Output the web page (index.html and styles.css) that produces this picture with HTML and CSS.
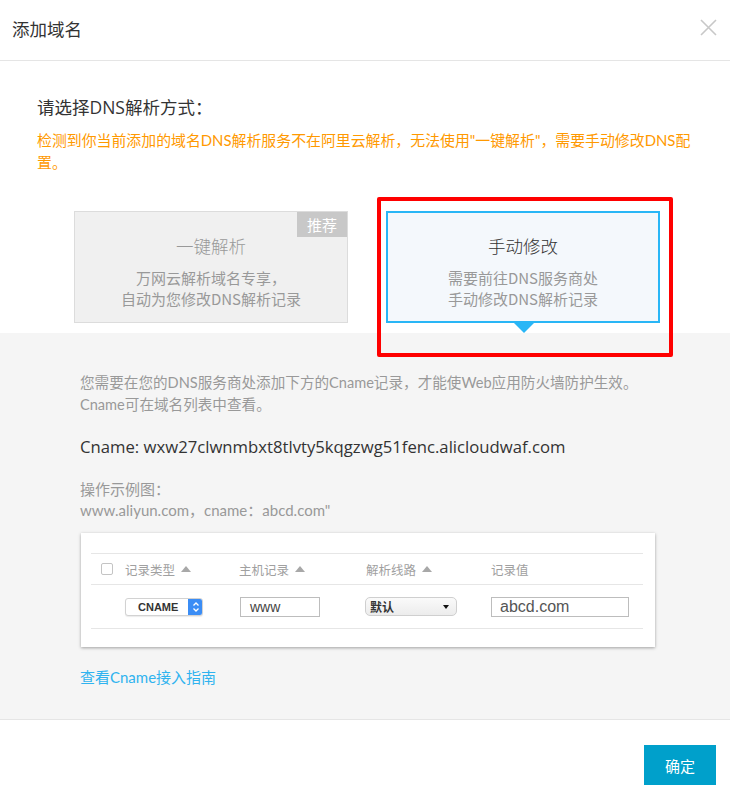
FILE: index.html
```html
<!DOCTYPE html>
<html lang="zh-CN">
<head>
<meta charset="utf-8">
<title>添加域名</title>
<link rel="stylesheet" href="styles.css">
</head>
<body>
<div class="dialog">
  <div class="header">
    <span class="title">添加域名</span>
    <span class="close" aria-label="关闭">
      <svg width="17" height="17" viewBox="0 0 17 17"><path d="M1 1L16 16M16 1L1 16" stroke="#c8c8c8" stroke-width="1.6" fill="none"/></svg>
    </span>
  </div>

  <div class="intro">
    <div class="question">请选择DNS解析方式：</div>
    <div class="warn">检测到你当前添加的域名DNS解析服务不在阿里云解析，无法使用"一键解析"，需要手动修改DNS配置。</div>
  </div>

  <div class="choices">
    <div class="card card-off">
      <span class="badge">推荐</span>
      <div class="card-title">一键解析</div>
      <div class="card-sub">万网云解析域名专享，<br>自动为您修改DNS解析记录</div>
    </div>
    <div class="card card-on">
      <div class="card-title">手动修改</div>
      <div class="card-sub">需要前往DNS服务商处<br>手动修改DNS解析记录</div>
      <span class="arrow"></span>
    </div>
  </div>

  <div class="detail">
    <p class="note">您需要在您的DNS服务商处添加下方的Cname记录，才能使Web应用防火墙防护生效。<br>Cname可在域名列表中查看。</p>
    <p class="cname">Cname: wxw27clwnmbxt8tlvty5kqgzwg51fenc.alicloudwaf.com</p>
    <p class="example">操作示例图：<br>www.aliyun.com，cname：abcd.com"</p>
    <div class="shot">
      <div class="trow thead">
        <span class="chk"></span>
        <span class="th">记录类型<i class="up"></i></span>
        <span class="th">主机记录<i class="up"></i></span>
        <span class="th">解析线路<i class="up"></i></span>
        <span class="th">记录值</span>
      </div>
      <div class="trow tbody">
        <span></span>
        <span class="sel-cname">CNAME<span class="spin"><svg width="8" height="12" viewBox="0 0 8 12"><path d="M1.5 4.5L4 2L6.5 4.5M1.5 7.5L4 10L6.5 7.5" stroke="#fff" stroke-width="1.3" fill="none"/></svg></span></span>
        <span class="inp inp-host">www</span>
        <span class="sel-line">默认<i class="down"></i></span>
        <span class="inp inp-val">abcd.com</span>
      </div>
    </div>
    <a class="guide" href="#">查看Cname接入指南</a>
  </div>

  <div class="footer">
    <button class="ok">确定</button>
  </div>

  <div class="highlight"></div>
</div>
</body>
</html>
```

FILE: styles.css
```css
* { box-sizing: border-box; }
html, body { margin: 0; padding: 0; background: #fff; }
body {
  font-family: "Noto Sans CJK SC", sans-serif;
  color: #333;
}
.dialog {
  position: relative;
  width: 730px;
  height: 802px;
  background: #fff;
}
.header {
  height: 61px;
  border-bottom: 1px solid #e5e5e5;
  display: flex;
  align-items: center;
  justify-content: space-between;
  padding: 0 13px 3px 12px;
}
.title { font-size: 17.5px; line-height: 24px; color: #333; }
.close { display: flex; margin-top: -2px; }

.intro { padding: 33px 0 0 37px; }
.question {
  font-family: "Open Sans", "Noto Sans CJK SC", sans-serif;
  font-size: 17.5px;
  line-height: 26px;
  color: #333;
}
.warn {
  margin-top: 10px;
  width: 670px;
  font-family: "Lato", "Noto Sans CJK SC", sans-serif;
  font-size: 14.9px;
  line-height: 21.5px;
  color: #ff9900;
}

.choices {
  display: flex;
  gap: 38px;
  padding: 38px 0 10px 74px;
}
.card {
  position: relative;
  width: 274px;
  height: 112px;
  text-align: center;
  padding-top: 22px;
}
.card-off {
  background: #f0f0f0;
  border: 1px solid #dcdcdc;
  color: #999;
}
.card-on {
  background: #f4f8fc;
  border: 2px solid #29b6f6;
  padding-top: 21px;
}
.card-title { font-size: 17.5px; line-height: 24px; font-weight: 300; }
.card-off .card-title { color: #999; }
.card-on .card-title { color: #333; }
.card-sub {
  margin-top: 9px;
  font-size: 15px;
  line-height: 21px;
  color: #999;
}
.badge {
  position: absolute;
  top: 0;
  right: 0;
  width: 50px;
  height: 25px;
  background: #c8c8c8;
  color: #fff;
  font-size: 15px;
  line-height: 25px;
  text-align: center;
}
.arrow {
  position: absolute;
  left: 126px;
  bottom: -12px;
  width: 0;
  height: 0;
  border-left: 10px solid transparent;
  border-right: 10px solid transparent;
  border-top: 10px solid #29b6f6;
}

.detail {
  background: #f5f5f5;
  border-bottom: 1px solid #e5e5e5;
  padding: 39px 0 30px 80px;
  height: 387px;
}
.detail p { margin: 0; }
.note {
  font-family: "Lato", "Noto Sans CJK SC", sans-serif;
  font-size: 14.6px;
  line-height: 22px;
  color: #999;
}
.cname {
  margin-top: 19px !important;
  font-family: "Open Sans", "Noto Sans CJK SC", sans-serif;
  font-size: 16.7px;
  line-height: 24px;
  color: #333;
}
.example {
  margin-top: 20px !important;
  font-family: "Lato", "Noto Sans CJK SC", sans-serif;
  font-size: 15px;
  line-height: 21px;
  color: #999;
}

.shot {
  margin: 12px 0 0 1px;
  width: 574px;
  height: 114px;
  background: #fff;
  box-shadow: 0 1px 3px rgba(0,0,0,0.35);
  padding: 20px 12px 0 10px;
}
.trow {
  display: grid;
  grid-template-columns: 34px 114px 127px 125px 1fr;
  align-items: center;
  border-top: 1px solid #e6e6e6;
}
.thead { height: 31px; }
.tbody { height: 45px; border-bottom: 1px solid #e6e6e6; }
.chk {
  margin-left: 10px;
  width: 12px;
  height: 12px;
  border: 1px solid #c4c4c4;
  border-radius: 2px;
  background: #fff;
}
.th {
  font-size: 12.5px;
  color: #a0a0a0;
  display: flex;
  align-items: center;
  gap: 6px;
}
.up {
  width: 0;
  height: 0;
  border-left: 5px solid transparent;
  border-right: 5px solid transparent;
  border-bottom: 6px solid #a8a8a8;
}
.sel-cname {
  width: 78px;
  height: 18px;
  border: 1px solid #d2d2d2;
  border-radius: 3px;
  background: #fff;
  display: flex;
  align-items: center;
  justify-content: space-between;
  padding-left: 12px;
  font-family: "Liberation Sans", sans-serif;
  font-size: 11px;
  font-weight: bold;
  color: #333;
  overflow: hidden;
  box-shadow: 0 1px 1px rgba(0,0,0,0.08);
}
.spin {
  width: 15px;
  height: 18px;
  background: #3b8df5;
  display: flex;
  align-items: center;
  justify-content: center;
  margin-right: -1px;
}
.inp {
  height: 20px;
  border: 1px solid #bdbdbd;
  background: #fff;
  display: flex;
  align-items: center;
  color: #444;
}
.inp-host {
  width: 80px;
  margin-left: 1px;
  padding-left: 9px;
  font-family: "Liberation Sans", sans-serif;
  font-size: 14px;
}
.inp-val {
  width: 138px;
  padding-left: 8px;
  font-family: "Liberation Sans", sans-serif;
  font-size: 16px;
  color: #555;
}
.sel-line {
  width: 92px;
  height: 19px;
  margin-left: -1px;
  border: 1px solid #cfcfcf;
  border-radius: 5px;
  background: linear-gradient(#fafafa, #ececec);
  display: flex;
  align-items: center;
  justify-content: space-between;
  padding: 0 7px 0 4px;
  font-size: 12px;
  font-weight: bold;
  color: #333;
}
.down {
  width: 0;
  height: 0;
  border-left: 3.5px solid transparent;
  border-right: 3.5px solid transparent;
  border-top: 4px solid #111;
}
.guide {
  display: inline-block;
  margin-top: 19px;
  font-family: "Lato", "Noto Sans CJK SC", sans-serif;
  font-size: 15px;
  line-height: 22px;
  color: #2fb3ef;
  text-decoration: none;
}

.footer {
  display: flex;
  justify-content: flex-end;
  padding: 25px 14px 0 0;
}
.ok {
  width: 72px;
  height: 40px;
  border: none;
  background: #00a0cb;
  color: #fff;
  font-family: "Noto Sans CJK SC", sans-serif;
  font-size: 15px;
  padding: 0;
}

.highlight {
  position: absolute;
  left: 377px;
  top: 197px;
  width: 296px;
  height: 160px;
  border: 4px solid #ff0000;
  border-radius: 2px;
  pointer-events: none;
}
```
